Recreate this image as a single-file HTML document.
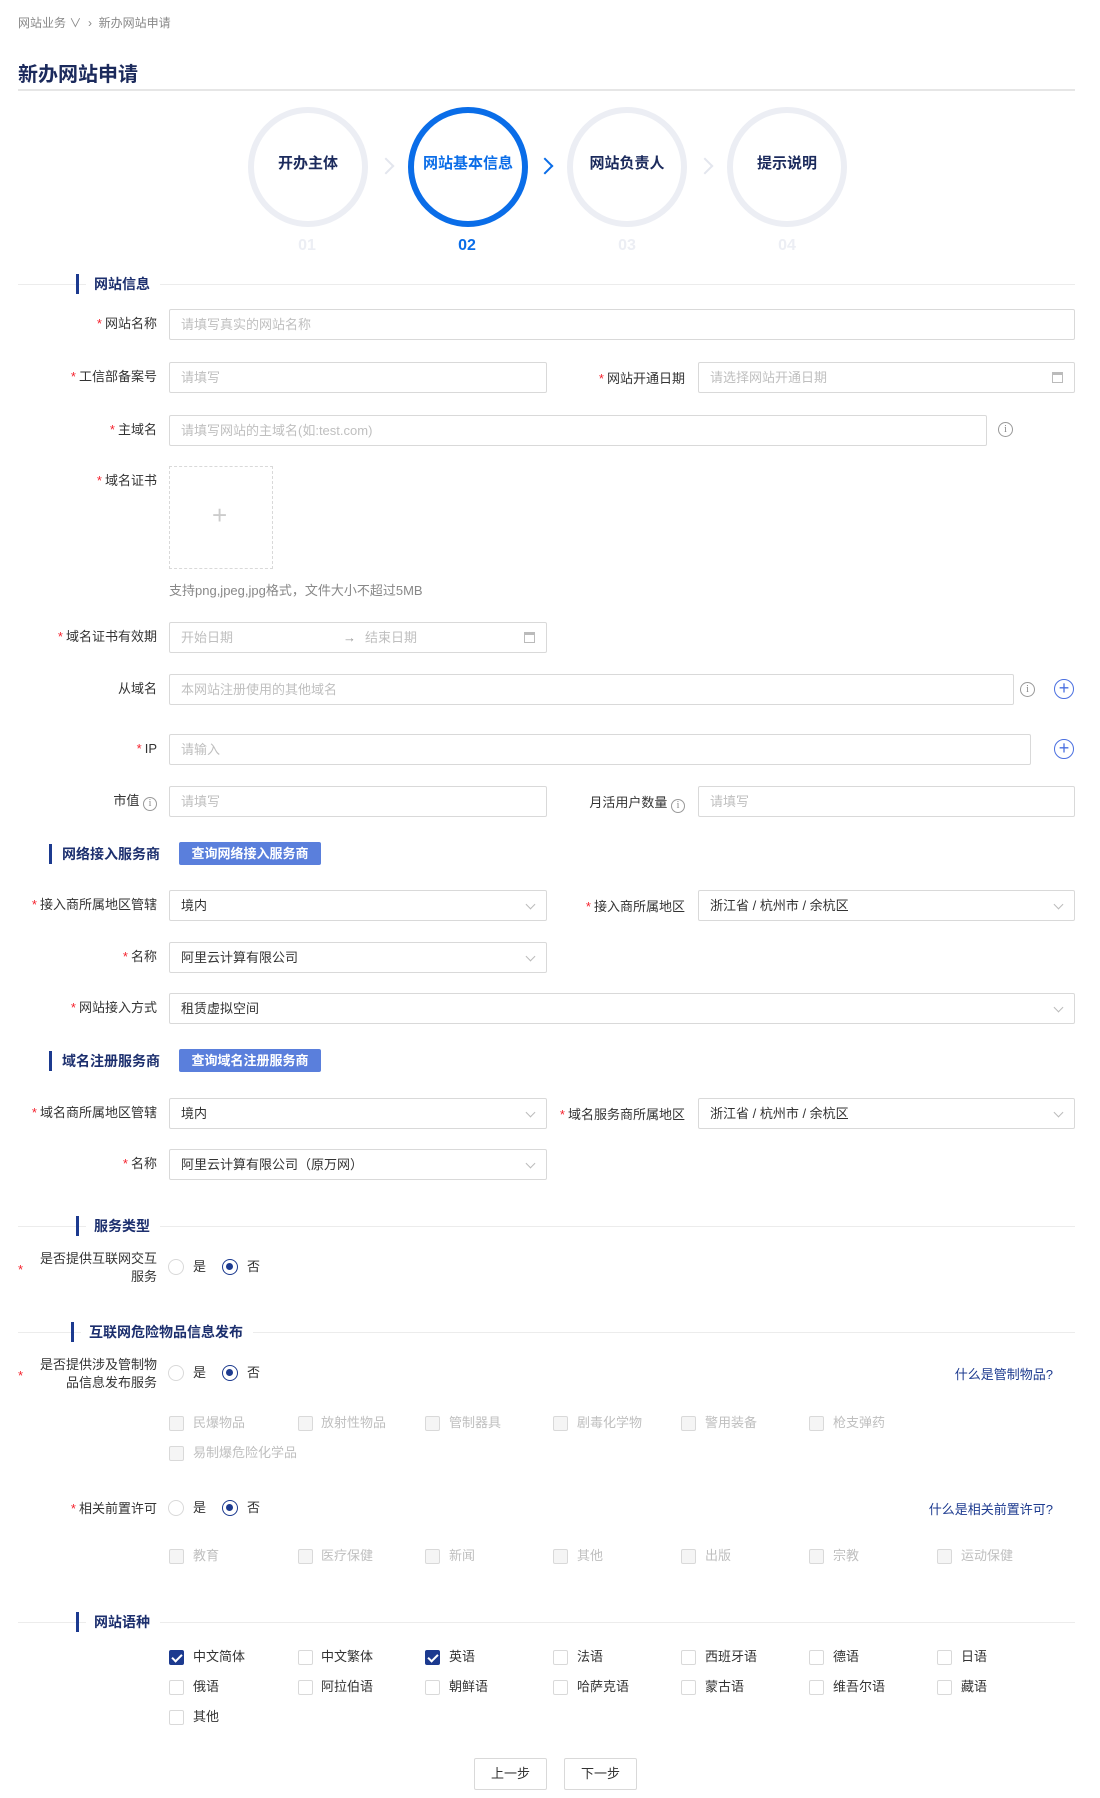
<!DOCTYPE html>
<html><head><meta charset="utf-8">
<style>
*{box-sizing:border-box;margin:0;padding:0}
body{width:1100px;height:1798px;background:#fff;position:relative;font-family:"Liberation Sans","Noto Sans CJK SC",sans-serif;font-size:13px;color:#333;overflow:hidden}
.a{position:absolute}
.l{position:absolute;left:0;width:157px;text-align:right;font-size:13px;color:#333;line-height:18px}
.l b,.req{color:#f5222d;font-weight:normal;margin-right:3px}
.i{position:absolute;height:31px;border:1px solid #d9d9d9;border-radius:2px;padding-left:11px;line-height:29px;color:#bfbfbf;font-size:13px;background:#fff}
.i.v{color:#333}
.arr{position:absolute;right:12px;top:10px;width:7px;height:7px;border-right:1px solid #bbb;border-bottom:1px solid #bbb;transform:rotate(45deg)}
.cal{position:absolute;right:11px;top:9px;width:11px;height:11px;border:1px solid #bbb;border-top-width:3px}
.circ{position:absolute;width:120px;height:120px;border-radius:50%;border:6px solid #eceef4;text-align:center;line-height:102px;font-size:15px;font-weight:bold;color:#1b2a5c}
.num{position:absolute;width:60px;text-align:center;font-size:16px;font-weight:bold;color:#eceef4}
.chev{position:absolute;width:12px;height:12px;border-right:2px solid #e3e6ee;border-top:2px solid #e3e6ee;transform:rotate(45deg)}
.bar{position:absolute;width:3px;height:20px;background:#1c3a8f}
.st{position:absolute;font-size:14px;font-weight:bold;color:#1c2f6e;line-height:20px;white-space:nowrap;background:#fff;padding-right:10px}
.hl{position:absolute;height:1px;background:#ececec}
.btn{position:absolute;height:23px;background:#5a7fdc;color:#fff;font-size:13px;font-weight:bold;line-height:23px;padding:0 9px;border-radius:2px;width:142px;text-align:center}
.info{position:absolute;width:15px;height:15px;border:1px solid #999;border-radius:50%;font-size:10px;line-height:13px;text-align:center;color:#888;font-family:"Liberation Serif",serif}
.plus{position:absolute;width:20px;height:20px;border:1.5px solid #4a6fe0;border-radius:50%;color:#4a6fe0;text-align:center;line-height:16px;font-size:18px}
.rad{position:absolute;width:16px;height:16px;border-radius:50%;border:1px solid #d9d9d9;background:#fff}
.rad.on{border:1.5px solid #1c3a8f}
.rad.on:after{content:"";position:absolute;left:3px;top:3px;width:7px;height:7px;border-radius:50%;background:#1c3a8f}
.rt{position:absolute;font-size:13px;color:#333;line-height:16px}
.cb{position:absolute;width:15px;height:15px;border:1px solid #d9d9d9;border-radius:2px;background:#fff}
.cb.d{background:#f5f5f5}
.cb.on{background:#1c3a8f;border-color:#1c3a8f}
.cb.on:after{content:"";position:absolute;left:4px;top:1px;width:4px;height:8px;border-right:2px solid #fff;border-bottom:2px solid #fff;transform:rotate(45deg)}
.ct{position:absolute;font-size:13px;line-height:16px;color:#333}
.ct.d{color:#bfbfbf}
.lnk{position:absolute;font-size:13px;color:#1c3a8f;text-align:right;width:200px}
.pb{position:absolute;height:32px;width:73px;border:1px solid #d9d9d9;background:#fff;text-align:center;line-height:30px;font-size:13px;color:#333;border-radius:2px}
</style></head><body>

<div class="a" style="left:18px;top:14px;font-size:12px;color:#888">网站业务 ∨ &nbsp;›&nbsp; 新办网站申请</div>
<div class="a" style="left:18px;top:58px;font-size:20px;font-weight:bold;color:#1b2a5c">新办网站申请</div>
<div class="hl" style="left:18px;top:89px;width:1057px;height:2px;background:#e6e6e6"></div>

<div class="circ" style="left:248px;top:107px">开办主体</div>
<div class="circ" style="left:408px;top:107px;border-color:#0a6de8;color:#0a6de8">网站基本信息</div>
<div class="circ" style="left:567px;top:107px">网站负责人</div>
<div class="circ" style="left:727px;top:107px">提示说明</div>
<div class="chev" style="left:380px;top:160px"></div>
<div class="chev" style="left:539px;top:160px;border-color:#0a6de8"></div>
<div class="chev" style="left:699px;top:160px"></div>
<div class="num" style="left:277px;top:237px">01</div>
<div class="num" style="left:437px;top:237px;color:#0a6de8">02</div>
<div class="num" style="left:597px;top:237px">03</div>
<div class="num" style="left:757px;top:237px">04</div>

<div class="hl" style="left:18px;top:284px;width:1057px"></div>
<div class="bar" style="left:76px;top:274px"></div>
<div class="st" style="left:86px;top:274px;padding-left:8px">网站信息</div>

<div class="l" style="top:315px"><b>*</b>网站名称</div>
<div class="i" style="left:169px;top:309px;width:906px">请填写真实的网站名称</div>

<div class="l" style="top:368px"><b>*</b>工信部备案号</div>
<div class="i" style="left:169px;top:362px;width:378px">请填写</div>
<div class="a" style="left:560px;top:368px;width:125px;text-align:right"><span class="req">*</span>网站开通日期</div>
<div class="i" style="left:698px;top:362px;width:377px">请选择网站开通日期<span class="cal"></span></div>

<div class="l" style="top:421px"><b>*</b>主域名</div>
<div class="i" style="left:169px;top:415px;width:818px">请填写网站的主域名(如:test.com)</div>
<div class="info" style="left:998px;top:422px">i</div>

<div class="l" style="top:472px"><b>*</b>域名证书</div>
<div class="a" style="left:169px;top:466px;width:104px;height:103px;border:1px dashed #d9d9d9"></div>
<div class="a" style="left:212px;top:500px;font-size:26px;color:#ccc;font-weight:200">+</div>
<div class="a" style="left:169px;top:580px;font-size:13px;color:#888">支持png,jpeg,jpg格式，文件大小不超过5MB</div>

<div class="l" style="top:628px"><b>*</b>域名证书有效期</div>
<div class="i" style="left:169px;top:622px;width:378px">开始日期<span style="position:absolute;left:173px;color:#999">→</span><span style="position:absolute;left:195px">结束日期</span><span class="cal"></span></div>

<div class="l" style="top:680px">从域名</div>
<div class="i" style="left:169px;top:674px;width:845px">本网站注册使用的其他域名</div>
<div class="info" style="left:1020px;top:682px">i</div>
<div class="plus" style="left:1054px;top:679px">+</div>

<div class="l" style="top:740px"><b>*</b>IP</div>
<div class="i" style="left:169px;top:734px;width:862px">请输入</div>
<div class="plus" style="left:1054px;top:739px">+</div>

<div class="l" style="top:792px">市值 <span class="info" style="position:relative;display:inline-block;width:14px;height:14px;line-height:12px;vertical-align:-1px">i</span></div>
<div class="i" style="left:169px;top:786px;width:378px">请填写</div>
<div class="a" style="left:560px;top:792px;width:125px;text-align:right">月活用户数量 <span class="info" style="position:relative;display:inline-block;width:14px;height:14px;line-height:12px;vertical-align:-1px">i</span></div>
<div class="i" style="left:698px;top:786px;width:377px">请填写</div>

<div class="bar" style="left:49px;top:844px"></div>
<div class="st" style="left:62px;top:844px">网络接入服务商</div>
<div class="btn" style="left:179px;top:842px">查询网络接入服务商</div>

<div class="l" style="top:896px"><b>*</b>接入商所属地区管辖</div>
<div class="i v" style="left:169px;top:890px;width:378px">境内<span class="arr"></span></div>
<div class="a" style="left:560px;top:896px;width:125px;text-align:right"><span class="req">*</span>接入商所属地区</div>
<div class="i v" style="left:698px;top:890px;width:377px">浙江省 / 杭州市 / 余杭区<span class="arr"></span></div>

<div class="l" style="top:948px"><b>*</b>名称</div>
<div class="i v" style="left:169px;top:942px;width:378px">阿里云计算有限公司<span class="arr"></span></div>

<div class="l" style="top:999px"><b>*</b>网站接入方式</div>
<div class="i v" style="left:169px;top:993px;width:906px">租赁虚拟空间<span class="arr"></span></div>

<div class="bar" style="left:49px;top:1051px"></div>
<div class="st" style="left:62px;top:1051px">域名注册服务商</div>
<div class="btn" style="left:179px;top:1049px">查询域名注册服务商</div>

<div class="l" style="top:1104px"><b>*</b>域名商所属地区管辖</div>
<div class="i v" style="left:169px;top:1098px;width:378px">境内<span class="arr"></span></div>
<div class="a" style="left:540px;top:1104px;width:145px;text-align:right"><span class="req">*</span>域名服务商所属地区</div>
<div class="i v" style="left:698px;top:1098px;width:377px">浙江省 / 杭州市 / 余杭区<span class="arr"></span></div>

<div class="l" style="top:1155px"><b>*</b>名称</div>
<div class="i v" style="left:169px;top:1149px;width:378px">阿里云计算有限公司（原万网）<span class="arr"></span></div>

<div class="hl" style="left:18px;top:1226px;width:1057px"></div>
<div class="bar" style="left:76px;top:1216px"></div>
<div class="st" style="left:86px;top:1216px;padding-left:8px">服务类型</div>

<div class="a" style="left:18px;top:1262px;color:#f5222d">*</div>
<div class="l" style="top:1250px;left:28px;width:129px">是否提供互联网交互<br>服务</div>
<div class="rad" style="left:168px;top:1259px"></div><div class="rt" style="left:193px;top:1259px">是</div>
<div class="rad on" style="left:222px;top:1259px"></div><div class="rt" style="left:247px;top:1259px">否</div>

<div class="hl" style="left:18px;top:1332px;width:1057px"></div>
<div class="bar" style="left:71px;top:1322px"></div>
<div class="st" style="left:81px;top:1322px;padding-left:8px">互联网危险物品信息发布</div>

<div class="a" style="left:18px;top:1368px;color:#f5222d">*</div>
<div class="l" style="top:1356px;left:28px;width:129px">是否提供涉及管制物<br>品信息发布服务</div>
<div class="rad" style="left:168px;top:1365px"></div><div class="rt" style="left:193px;top:1365px">是</div>
<div class="rad on" style="left:222px;top:1365px"></div><div class="rt" style="left:247px;top:1365px">否</div>
<div class="lnk" style="left:853px;top:1364px">什么是管制物品?</div>

<div class="cb d" style="left:169px;top:1416px"></div><div class="ct d" style="left:193px;top:1415px">民爆物品</div>
<div class="cb d" style="left:298px;top:1416px"></div><div class="ct d" style="left:321px;top:1415px">放射性物品</div>
<div class="cb d" style="left:425px;top:1416px"></div><div class="ct d" style="left:449px;top:1415px">管制器具</div>
<div class="cb d" style="left:553px;top:1416px"></div><div class="ct d" style="left:577px;top:1415px">剧毒化学物</div>
<div class="cb d" style="left:681px;top:1416px"></div><div class="ct d" style="left:705px;top:1415px">警用装备</div>
<div class="cb d" style="left:809px;top:1416px"></div><div class="ct d" style="left:833px;top:1415px">枪支弹药</div>
<div class="cb d" style="left:169px;top:1446px"></div><div class="ct d" style="left:193px;top:1445px">易制爆危险化学品</div>

<div class="l" style="top:1500px"><b>*</b>相关前置许可</div>
<div class="rad" style="left:168px;top:1500px"></div><div class="rt" style="left:193px;top:1500px">是</div>
<div class="rad on" style="left:222px;top:1500px"></div><div class="rt" style="left:247px;top:1500px">否</div>
<div class="lnk" style="left:853px;top:1499px">什么是相关前置许可?</div>

<div class="cb d" style="left:169px;top:1549px"></div><div class="ct d" style="left:193px;top:1548px">教育</div>
<div class="cb d" style="left:298px;top:1549px"></div><div class="ct d" style="left:321px;top:1548px">医疗保健</div>
<div class="cb d" style="left:425px;top:1549px"></div><div class="ct d" style="left:449px;top:1548px">新闻</div>
<div class="cb d" style="left:553px;top:1549px"></div><div class="ct d" style="left:577px;top:1548px">其他</div>
<div class="cb d" style="left:681px;top:1549px"></div><div class="ct d" style="left:705px;top:1548px">出版</div>
<div class="cb d" style="left:809px;top:1549px"></div><div class="ct d" style="left:833px;top:1548px">宗教</div>
<div class="cb d" style="left:937px;top:1549px"></div><div class="ct d" style="left:961px;top:1548px">运动保健</div>

<div class="hl" style="left:18px;top:1622px;width:1057px"></div>
<div class="bar" style="left:76px;top:1612px"></div>
<div class="st" style="left:86px;top:1612px;padding-left:8px">网站语种</div>

<div class="cb on" style="left:169px;top:1650px"></div><div class="ct" style="left:193px;top:1649px">中文简体</div>
<div class="cb" style="left:298px;top:1650px"></div><div class="ct" style="left:321px;top:1649px">中文繁体</div>
<div class="cb on" style="left:425px;top:1650px"></div><div class="ct" style="left:449px;top:1649px">英语</div>
<div class="cb" style="left:553px;top:1650px"></div><div class="ct" style="left:577px;top:1649px">法语</div>
<div class="cb" style="left:681px;top:1650px"></div><div class="ct" style="left:705px;top:1649px">西班牙语</div>
<div class="cb" style="left:809px;top:1650px"></div><div class="ct" style="left:833px;top:1649px">德语</div>
<div class="cb" style="left:937px;top:1650px"></div><div class="ct" style="left:961px;top:1649px">日语</div>

<div class="cb" style="left:169px;top:1680px"></div><div class="ct" style="left:193px;top:1679px">俄语</div>
<div class="cb" style="left:298px;top:1680px"></div><div class="ct" style="left:321px;top:1679px">阿拉伯语</div>
<div class="cb" style="left:425px;top:1680px"></div><div class="ct" style="left:449px;top:1679px">朝鲜语</div>
<div class="cb" style="left:553px;top:1680px"></div><div class="ct" style="left:577px;top:1679px">哈萨克语</div>
<div class="cb" style="left:681px;top:1680px"></div><div class="ct" style="left:705px;top:1679px">蒙古语</div>
<div class="cb" style="left:809px;top:1680px"></div><div class="ct" style="left:833px;top:1679px">维吾尔语</div>
<div class="cb" style="left:937px;top:1680px"></div><div class="ct" style="left:961px;top:1679px">藏语</div>

<div class="cb" style="left:169px;top:1710px"></div><div class="ct" style="left:193px;top:1709px">其他</div>

<div class="pb" style="left:474px;top:1758px">上一步</div>
<div class="pb" style="left:564px;top:1758px">下一步</div>

</body></html>
